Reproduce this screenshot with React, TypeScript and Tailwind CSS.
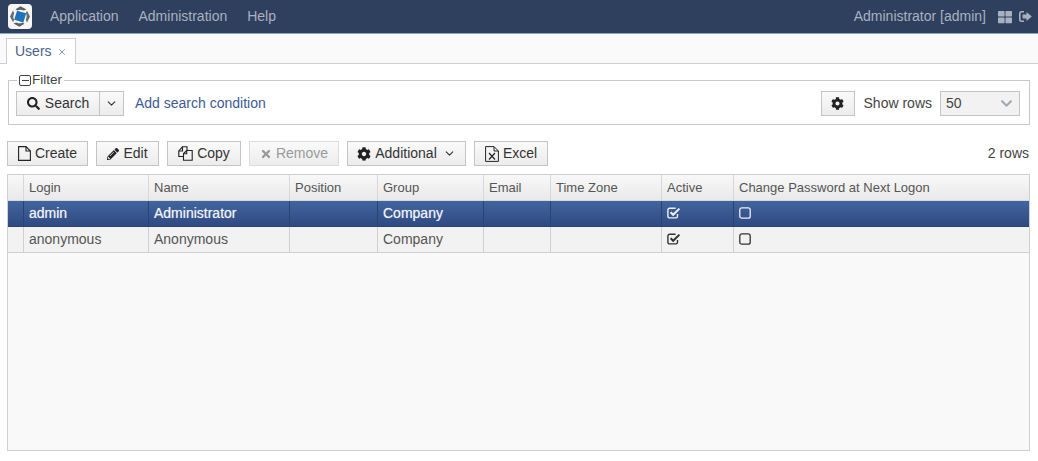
import React from "react";
import { FaSearch, FaCog, FaPencilAlt, FaTimes, FaThLarge, FaChevronDown } from "react-icons/fa";
import { FiChevronDown, FiX } from "react-icons/fi";

const Logo = () => (
  <svg width="24" height="25" viewBox="0 0 24 25" className="block">
    <rect x="0" y="0" width="24" height="25" rx="4" fill="#f6f6f6" />
    <path d="M7.5 5.2 L12.5 2.2 L18.5 5.6 L15.8 6.6 C13 5.4 11 5.4 9.5 6.6Z" fill="#5f5f5f" />
    <path d="M19 6.8 L22 12.5 L19 18.6 L17.8 15.8 C19 13 19 11 17.8 9.3Z" fill="#6b6b6b" />
    <path d="M16.5 19.8 L11.5 22.8 L5.5 19.4 L8.2 18.4 C11 19.6 13 19.6 14.5 18.4Z" fill="#5f5f5f" />
    <path d="M5 18.2 L2 12.5 L5 6.4 L6.2 9.2 C5 12 5 14 6.2 15.7Z" fill="#6b6b6b" />
    <path d="M9 6.8 L18.2 9.2 L15.4 18.4 L6.2 15.8Z" fill="#1c74bd" />
  </svg>
);

const CopyIcon = () => (
  <svg width="15" height="15" viewBox="0 0 15 15" fill="none" stroke="#222" strokeWidth="1.1">
    <path d="M5.5 10.5 H.8 V5 L4.5 .8 H9 V4.5" />
    <path d="M4.5 .8 V5 H.8" />
    <path d="M5.5 10 V7.5 L8.7 4.5 H14.2 V14.2 H5.5 V10" />
    <path d="M8.7 4.5 V7.8 H5.5" />
  </svg>
);

const FileIcon = () => (
  <svg width="13" height="15" viewBox="0 0 13 15" fill="none" stroke="#222" strokeWidth="1.1">
    <path d="M.6 .6 H8 L12.4 5 V14.4 H.6Z" />
    <path d="M8 .6 V5 H12.4" />
  </svg>
);

const ExcelIcon = () => (
  <svg width="14" height="16" viewBox="0 0 14 16" fill="none" stroke="#222" strokeWidth="1">
    <path d="M.6 .6 H9 L13.4 5 V15.4 H.6Z" />
    <path d="M9 .6 V5 H13.4" />
    <path d="M4 7 L10 13.5 M10 7 L4 13.5" strokeWidth="1.2" />
  </svg>
);

const LogoutIcon = () => (
  <svg width="13" height="11" viewBox="0 0 13 11" fill="#a9b1bf">
    <path d="M5 0 V1.6 H2.4 C1.9 1.6 1.6 2 1.6 2.4 V8.6 C1.6 9 1.9 9.4 2.4 9.4 H5 V11 H2.4 C1 11 0 10 0 8.6 V2.4 C0 1 1 0 2.4 0Z" />
    <path d="M7.5 1 L12.8 5.5 L7.5 10 V7.4 H3.6 V3.6 H7.5Z" />
  </svg>
);

const CheckIcon = ({ color }: { color: string }) => (
  <svg width="14" height="12" viewBox="0 0 14 12" fill="none" stroke={color}>
    <path d="M10.5 7 V9.2 C10.5 10.2 9.8 10.9 8.9 10.9 H2.6 C1.6 10.9 .9 10.2 .9 9.2 V3 C.9 2 1.6 1.3 2.6 1.3 H8.6" strokeWidth="1.4" />
    <path d="M3.6 5.2 L6.2 7.8 L12.4 1.6" strokeWidth="2" />
  </svg>
);

const BoxIcon = ({ color }: { color: string }) => (
  <svg width="12" height="12" viewBox="0 0 12 12" fill="none" stroke={color} strokeWidth="1.3">
    <rect x=".8" y=".8" width="10.4" height="10.4" rx="2" />
  </svg>
);

const Btn = ({ icon, label, w, disabled, after }: { icon: React.ReactNode; label: string; w: string; disabled?: boolean; after?: React.ReactNode }) => (
  <button className={`h-[25px] ${w} flex items-center justify-center gap-1 border bg-gradient-to-b from-[#fafafa] to-[#ececec] text-[14px] ${disabled ? "border-[#dcdcdc] text-[#9a9a9a]" : "border-[#c4c4c4] text-[#333]"}`}>
    {icon}
    <span>{label}</span>
    {after}
  </button>
);

const cols = [
  { t: "Login", w: "w-[125px]" },
  { t: "Name", w: "w-[141px]" },
  { t: "Position", w: "w-[88px]" },
  { t: "Group", w: "w-[106px]" },
  { t: "Email", w: "w-[67px]" },
  { t: "Time Zone", w: "w-[111px]" },
  { t: "Active", w: "w-[72px]" },
  { t: "Change Password at Next Logon", w: "flex-1" },
];

const Row = ({ login, name, selected }: { login: string; name: string; selected?: boolean }) => {
  const cellBorder = selected ? "border-[#2a4373]" : "border-[#d0d0d0]";
  const iconColor = selected ? "#eef1f6" : "#333";
  const values = [login, name, "", "Company", "", "", "check", "box"];
  return (
    <div className={`flex h-[26px] border-b ${selected ? "border-[#2b4272] bg-gradient-to-b from-[#42659f] to-[#2f4a82] text-[#f2f4f8] [text-shadow:0_0_1px_rgba(255,255,255,0.55)]" : "border-[#cfcfcf] bg-[#f2f2f2] text-[#555]"}`}>
      <div className={`w-[16px] border-r ${cellBorder}`} />
      {values.map((v, i) => (
        <div key={i} className={`${cols[i].w} flex items-center px-[5px] ${i < 7 ? `border-r ${cellBorder}` : ""}`}>
          {v === "check" ? (
            <span className="-mt-[2px]"><CheckIcon color={iconColor} /></span>
          ) : v === "box" ? (
            <span className="-mt-[2px]"><BoxIcon color={iconColor} /></span>
          ) : (
            v
          )}
        </div>
      ))}
    </div>
  );
};

export default function App() {
  return (
    <div className="h-[461px] w-[1038px] overflow-hidden bg-white text-[14px] text-[#444] font-['Liberation_Sans',Arial,sans-serif]">
      <header className="h-[34px] flex items-center justify-between bg-[#2f405f] border-b border-[#8ea3c8] pl-2 pr-[6px] text-[#a9b1bf]">
        <div className="flex items-center">
          <Logo />
          <nav className="ml-[18px] flex gap-5">
            <span>Application</span>
            <span>Administration</span>
            <span>Help</span>
          </nav>
        </div>
        <div className="flex items-center">
          <span>Administrator [admin]</span>
          <FaThLarge size={14} className="ml-3" />
          <span className="ml-[7px]"><LogoutIcon /></span>
        </div>
      </header>

      <div className="h-[30px] flex items-end bg-[#fafafa] border-b border-[#cfcfcf] pl-[6px]">
        <div className="relative top-px h-[26px] w-[70px] flex items-center gap-[5px] pl-[8px] bg-white border border-b-0 border-[#cfcfcf] text-[#4a5f8c]">
          <span>Users</span>
          <FiX size={10} className="text-[#6d7ea0]" />
        </div>
      </div>

      <fieldset className="mt-[9px] mx-2 h-[52px] border border-[#c8c8c8] pl-[7px] pr-[9px] flex">
        <legend className="ml-px px-[2px] flex items-center gap-px leading-[14px]">
          <span className="w-[12px] h-[11px] border border-[#444] rounded-[2px] flex items-center justify-center">
            <span className="block w-[7px] h-px bg-[#444]" />
          </span>
          <span className="text-[13.5px]">Filter</span>
        </legend>
        <div className="mt-[4px] h-[25px] self-start flex w-full items-center">
          <div className="flex h-[25px] border border-[#c4c4c4] bg-gradient-to-b from-[#fafafa] to-[#ececec] text-[#333]">
            <div className="w-[83px] flex items-center justify-center gap-[5px] border-r border-[#c4c4c4]">
              <FaSearch size={13} className="text-[#222]" />
              <span>Search</span>
            </div>
            <div className="w-[23px] flex items-center justify-center">
              <FiChevronDown size={13} />
            </div>
          </div>
          <span className="ml-[11px] text-[#3d5a94]">Add search condition</span>
          <div className="ml-auto flex items-center">
            <div className="h-[25px] w-[34px] flex items-center justify-center border border-[#c4c4c4] bg-gradient-to-b from-[#fafafa] to-[#ececec]">
              <FaCog size={13} className="text-[#222]" />
            </div>
            <span className="ml-[9px]">Show rows</span>
            <div className="ml-[8px] h-[25px] w-[80px] flex items-center justify-between border border-[#c4c4c4] bg-[#f2f2f2] pl-[5px] pr-[6px]">
              <span>50</span>
              <FaChevronDown size={13} className="text-[#a0a7b5]" />
            </div>
          </div>
        </div>
      </fieldset>

      <div className="mt-4 flex items-center pl-[7px] pr-[9px]">
        <div className="flex gap-2">
          <Btn w="w-[81px]" icon={<FileIcon />} label="Create" />
          <Btn w="w-[63px]" icon={<FaPencilAlt size={12} className="text-[#222]" />} label="Edit" />
          <Btn w="w-[74px]" icon={<CopyIcon />} label="Copy" />
          <Btn w="w-[90px]" disabled icon={<FaTimes size={12} className="text-[#9a9a9a]" />} label="Remove" />
          <Btn w="w-[119px]" icon={<FaCog size={14} className="text-[#222]" />} label="Additional" after={<FiChevronDown size={13} className="ml-[2px]" />} />
          <Btn w="w-[74px]" icon={<ExcelIcon />} label="Excel" />
        </div>
        <span className="ml-auto">2 rows</span>
      </div>

      <div className="mt-2 mx-[7px] h-[277px] w-[1023px] border border-[#cfcfcf] bg-[#f9f9f9]">
        <div className="flex h-[26px] border-b border-[#d8d8d8] bg-gradient-to-b from-[#f8f8f8] to-[#e9e9e9] text-[#555] text-[13px]">
          <div className="w-[16px] border-r border-[#d8d8d8]" />
          {cols.map((c, i) => (
            <div key={c.t} className={`${c.w} flex items-center px-[5px] ${i < 7 ? "border-r border-[#d8d8d8]" : ""}`}>{c.t}</div>
          ))}
        </div>
        <Row login="admin" name="Administrator" selected />
        <Row login="anonymous" name="Anonymous" />
      </div>
    </div>
  );
}
